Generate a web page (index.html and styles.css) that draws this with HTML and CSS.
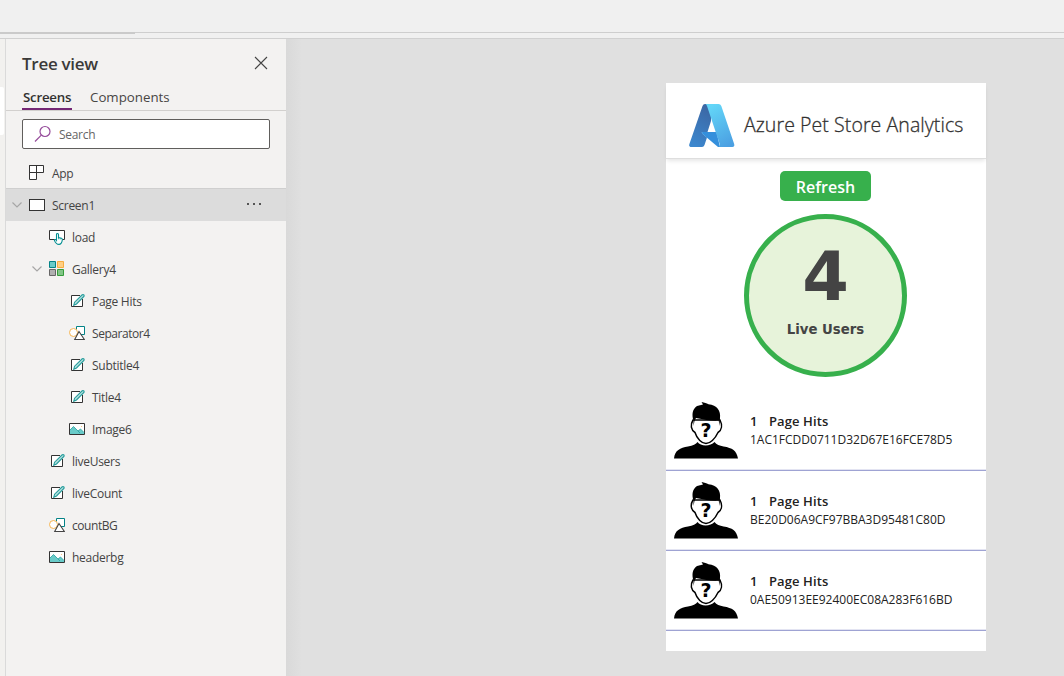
FILE: index.html
```html
<!DOCTYPE html>
<html lang="en">
<head>
<meta charset="utf-8">
<title>Azure Pet Store Analytics</title>
<link rel="stylesheet" href="styles.css">
</head>
<body>
<svg class="defs" width="0" height="0">
  <symbol id="chevron" viewBox="0 0 10 6"><path d="M.5.5 5 5 9.500.5" fill="none" stroke="#a6a6a6" stroke-width="1.200"/></symbol>
  <symbol id="label" viewBox="0 0 14 14"><path d="M9 1.500H.5v11h11V5" fill="#fff" stroke="#333" /><path d="M2.800 11.200l.8-3L11.200.8c1.500-.6 2.300.5 1.700 1.600L5.500 10z" fill="#b5e0df" stroke="#259c9b" stroke-width="1.100"/></symbol>
  <symbol id="shapes" viewBox="0 0 16 14"><path d="M7.500.5h8v8h-8z" fill="#fff" stroke="#038387"/><circle cx="4.500" cy="6.500" r="4" fill="#fff" stroke="#f7b450"/><path d="M10 5.500 5.700 13.500h9.600z" fill="#fff" stroke="#444" stroke-width="1.100"/></symbol>
  <symbol id="image" viewBox="0 0 16 12"><path d="M.5.5h15v11H.5z" fill="#fff" stroke="#333"/><path d="M1 7l3.500-3.500L9 8l2.500-2L15 9.500V11H1z" fill="#69cbc9"/><path d="M1 7l3.500-3.500L9 8l2.500-2L15 9.500M9 8l2 2" fill="none" stroke="#25a09f" stroke-width=".8"/><path d="M12 3h1v1h-1z" fill="#f8c982"/></symbol>
  <symbol id="person" viewBox="0 0 64 57">
    <path d="M0 56.500C1 48 6 46 14 44.500c5-1 8-2 9.500-4.500 3 4.500 13 4.500 17 0 2 3 5 3.500 9 4.500 9 1.500 13 4 14.500 12z"/>
    <path d="M19 18c-3 5-2 10 2 12.500C23 37 28 41.500 32 41.500S41 37 44 30.500C48 28 48.500 23 46 18z" fill="#fff" stroke="#000" stroke-width="1.500"/>
    <path d="M19.500 24V19c-2-7-1-12 3.500-15L29 2.500 27.500 0c3 .6 5 1.200 7 2.200C43 3 47 9 46 16l-.5 8-.8-5.500C38 19 31 18 22 16l-1.500 3z"/>
  </symbol>
</svg>
<div class="topbar"><div class="progress"></div></div>
<div class="strip"></div>
<div class="workspace">
  <div class="rail"><div class="rail-item"></div></div>
  <aside class="panel">
    <div class="panel-head"><h1 class="panel-title">Tree view</h1><svg class="close" width="14" height="14"><path d="M1 1 13 13M13 1 1 13" stroke="#444" stroke-width="1.100"/></svg></div>
    <nav class="tabs"><span class="tab active">Screens</span><span class="tab components">Components</span></nav>
    <div class="search"><svg width="18" height="18"><circle cx="11" cy="6.500" r="5" fill="none" stroke="#954b9a" stroke-width="1.200"/><path d="M7.300 10.200 1 16.500" stroke="#954b9a" stroke-width="1.200"/></svg><span>Search</span></div>
    <div class="tree">
      <div class="row l0"><svg width="16" height="16"><path d="M.5.5h14v7H.5zM.5.5h7v14h-7z" fill="#fff" stroke="#333"/></svg><span>App</span></div>
      <div class="row l0 selected"><svg class="chev" width="10" height="6"><use href="#chevron"/></svg><svg width="16" height="12"><rect x=".5" y=".5" width="15" height="11" fill="#fff" stroke="#333"/></svg><span>Screen1</span><svg class="more" width="16" height="4"><path d="M1 1h2v2H1zM7 1h2v2H7zM13 1h2v2h-2z" fill="#555"/></svg></div>
      <div class="row l1"><svg width="16" height="16"><path d="M.5 1.500h15v9H.5z" fill="#fff" stroke="#333"/><path d="M7.500 10.500v-5c0-1.400 2-1.400 2 0v3l3 .7c.8.300 1 .8.800 1.800-.3 2-.6 4.400-3.300 4.400-2.500 0-3.500-1.300-4.500-3.800-.3-1.200.9-1.600 2-.2z" fill="#fff" stroke="#038f92" stroke-width="1.100"/><path d="M9.500 8.500v1.800M11.200 9v1.500" stroke="#038f92" stroke-width=".7"/></svg><span>load</span></div>
      <div class="row l1"><svg class="chev" width="10" height="6"><use href="#chevron"/></svg><svg width="16" height="16"><path d="M.5.5h6v6h-6z" fill="#69cbc9" stroke="#038387"/><path d="M8.500.5h6v6h-6z" fill="#ffcf83" stroke="#f7ad40"/><path d="M.5 8.500h6v6h-6z" fill="#b0b0b0" stroke="#666"/><path d="M8.500 8.500h6v6h-6z" fill="#82c587" stroke="#359b3b"/></svg><span>Gallery4</span></div>
      <div class="row l2"><svg width="16" height="14"><use href="#label" x="2" width="14" height="14"/></svg><span>Page Hits</span></div>
      <div class="row l2"><svg width="16" height="14"><use href="#shapes"/></svg><span class="tight">Separator4</span></div>
      <div class="row l2"><svg width="16" height="14"><use href="#label" x="2" width="14" height="14"/></svg><span>Subtitle4</span></div>
      <div class="row l2"><svg width="16" height="14"><use href="#label" x="2" width="14" height="14"/></svg><span>Title4</span></div>
      <div class="row l2"><svg width="16" height="12"><use href="#image"/></svg><span>Image6</span></div>
      <div class="row l1"><svg width="16" height="14"><use href="#label" x="2" width="14" height="14"/></svg><span>liveUsers</span></div>
      <div class="row l1"><svg width="16" height="14"><use href="#label" x="2" width="14" height="14"/></svg><span>liveCount</span></div>
      <div class="row l1"><svg width="16" height="14"><use href="#shapes"/></svg><span class="tight">countBG</span></div>
      <div class="row l1"><svg width="16" height="12"><use href="#image"/></svg><span>headerbg</span></div>
    </div>
  </aside>
  <main class="canvas">
    <section class="app">
      <header class="app-head">
        <svg class="azure" width="46" height="44" viewBox="0 0 46 44">
          <defs>
            <linearGradient id="az1" x1=".6" y1="0" x2=".3" y2="1"><stop stop-color="#3c67a4"/><stop offset="1" stop-color="#3c87ce"/></linearGradient>
            <linearGradient id="az2" x1=".3" y1="0" x2=".7" y2="1"><stop stop-color="#63d6f8"/><stop offset="1" stop-color="#4ba0e2"/></linearGradient>
          </defs>
          <path d="M16 0h6v17L18.500 28h-5q-1.200.5-.4 1.500L18 33.500 15.500 41q-.7 2-2.500 2H2.500C.5 43-.3 42 .4 40L13.500 2Q14.200 0 16 0z" fill="url(#az1)"/>
          <path d="M13.500 28H27.500L31 43h-2L13 29.500Q12.500 28.300 13.500 28z" fill="#348fdc"/>
          <path d="M16.500 0H29.500q2 0 2.800 2L45 39.500q1.200 3.500-1.500 3.500H29q2.500 0 1.700-3L18 2Q17.500.5 16.500 0z" fill="url(#az2)"/>
        </svg>
        <span class="app-title">Azure Pet Store Analytics</span>
      </header>
      <button class="refresh">Refresh</button>
      <div class="counter"><span class="num">4</span><span class="live">Live Users</span></div>
      <div class="gallery">
        <div class="item"><svg width="64" height="57"><use href="#person"/><text x="32" y="34.500" text-anchor="middle" class="mark">?</text></svg><div class="info"><b><i>1</i>Page Hits</b><span class="hash">1AC1FCDD0711D32D67E16FCE78D5</span></div></div>
        <div class="item"><svg width="64" height="57"><use href="#person"/><text x="32" y="34.500" text-anchor="middle" class="mark">?</text></svg><div class="info"><b><i>1</i>Page Hits</b><span class="hash">BE20D06A9CF97BBA3D95481C80D</span></div></div>
        <div class="item"><svg width="64" height="57"><use href="#person"/><text x="32" y="34.500" text-anchor="middle" class="mark">?</text></svg><div class="info"><b><i>1</i>Page Hits</b><span class="hash">0AE50913EE92400EC08A283F616BD</span></div></div>
      </div>
    </section>
  </main>
</div>
</body>
</html>
```
FILE: styles.css
```css
* { box-sizing: border-box; }
body { margin: 0; width: 1064px; height: 676px; overflow: hidden; background: #f2f1ef; font-family: "Open Sans", "Noto Sans", sans-serif; color: #323130; display: flex; flex-direction: column; }
svg { flex: none; display: block; }
.defs { position: absolute; }
.topbar { height: 34px; background: linear-gradient(#f0f0f0 32px, #cecece 32px, #cecece 33px, #f0f0f0 33px); display: flex; align-items: flex-end; }
.progress { width: 135px; height: 2px; background: #cacaca; }
.strip { height: 5px; border-bottom: 1px solid #d0d0d0; background: #f0f0f0; }
.workspace { display: flex; flex: 1; min-height: 0; }
.rail { width: 6px; border-right: 1px solid #dadada; padding-top: 48px; }
.rail-item { width: 4px; height: 48px; background: #fff; border-radius: 0 2px 2px 0; }
.panel { width: 280px; background: #f3f2f1; }
.panel-head { height: 48px; padding: 0 18px 0 16px; display: flex; align-items: center; justify-content: space-between; }
.panel-title { margin: 0; font-size: 17px; font-weight: 600; letter-spacing: -.28px; color: #3b3a39; }
.tabs { height: 24px; display: flex; padding-left: 16px; border-bottom: 1px solid #d2d0ce; font-size: 13.300px; line-height: 20px; }
.tab { height: 23px; }
.active { width: 50px; padding-left: 1px; font-weight: 600; border-bottom: 2px solid #742774; letter-spacing: -.25px; }
.components { margin-left: 18px; color: #484644; }
.search { margin: 8px 16px 8px; height: 30px; width: 248px; border: 1px solid #605e5c; border-radius: 2px; background: #fff; display: flex; align-items: center; padding-left: 11px; gap: 7px; font-size: 12px; letter-spacing: -.4px; color: #666; }
.search { letter-spacing: -.3px; }
.row { height: 32px; display: flex; align-items: center; font-size: 12px; letter-spacing: -.28px; color: #444; }
.row span { margin-left: 7px; }
.row .tight { letter-spacing: -.45px; }
.l0 { padding-left: 23px; }
.l1 { padding-left: 43px; }
.l2 { padding-left: 63px; }
.chev { margin-left: -17px; margin-right: 7px; }
.selected { height: 33px; margin-top: -1px; background: #dcdcdc; border-top: 1px solid #cfcfcf; }
.more { margin: -3px 24px 0 auto; }
.canvas { flex: 1; padding: 44px 0 0 380px; background: linear-gradient(90deg, #d9d9d9, #e0e0e0 16px); }
.app { width: 320px; height: 568px; background: #fff; display: flex; flex-direction: column; align-items: center; }
.app-head { width: 320px; height: 76px; flex: none; border-bottom: 1px solid #dedede; box-shadow: 0 3px 4px -1px #0000001a; display: flex; align-items: center; padding: 11px 0 0 23px; }
.app-title { margin: -4px 0 0 9px; font-size: 19.500px; letter-spacing: .08px; white-space: nowrap; font-weight: 300; -webkit-text-stroke: .3px #323130; }
.refresh { margin: 12px 1px 0 0; width: 91px; height: 30px; flex: none; border: 0; border-radius: 5px; background: #37b04c; color: #fff; font: 600 16px/32px "Open Sans", sans-serif; padding: 0; }
.counter { margin: 13px 1px 0 0; width: 163px; height: 163px; flex: none; border: 5px solid #37b04c; border-radius: 50%; background: #e7f3da; display: flex; flex-direction: column; align-items: center; color: #444; font-family: "DejaVu Sans", sans-serif; font-weight: 700; }
.num { font-size: 67px; line-height: 68px; margin-top: 24px; }
.live { font-size: 13.300px; line-height: 16px; margin-top: 11px; }
.gallery { width: 320px; margin-top: 14px; }
.item { height: 80px; border-bottom: 1px solid #9fa3d3; box-shadow: inset 0 -1px #e3e4f2; padding: 11px 0 0 8px; display: flex; }
.mark { font: 700 19px "DejaVu Sans", sans-serif; }
.info { margin: 10px 0 0 12px; font-size: 13px; line-height: 18px; color: #222; display: flex; flex-direction: column; }
.info b { font-weight: 600; letter-spacing: .1px; }
.info i { display: inline-block; width: 19px; font-style: normal; }
.hash { margin-top: 1px; font-size: 12px; white-space: nowrap; }
```
